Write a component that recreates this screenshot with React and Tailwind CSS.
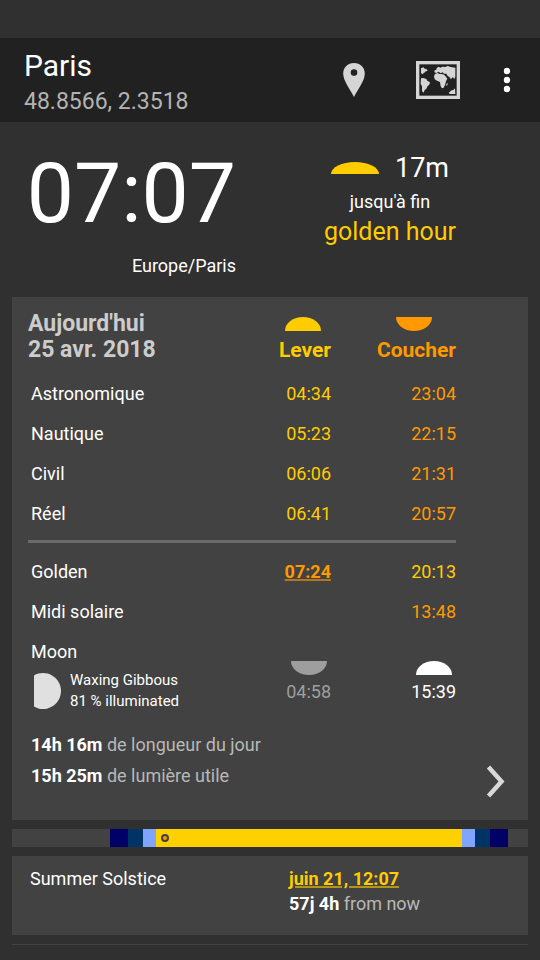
const sunTimes = [
  ["Astronomique", "04:34", "23:04"],
  ["Nautique", "05:23", "22:15"],
  ["Civil", "06:06", "21:31"],
  ["Réel", "06:41", "20:57"],
];

const dayPhases = [
  { name: "night", size: 98, color: "bg-transparent" },
  { name: "astronomical-am", size: 18, color: "bg-[#000066]" },
  { name: "nautical-am", size: 15, color: "bg-[#003366]" },
  { name: "civil-am", size: 13, color: "bg-[#80a5ff]" },
  { name: "day", size: 306, color: "bg-[#ffd000]" },
  { name: "civil-pm", size: 13, color: "bg-[#80a5ff]" },
  { name: "nautical-pm", size: 15, color: "bg-[#003366]" },
  { name: "astronomical-pm", size: 18, color: "bg-[#000066]" },
  { name: "late-night", size: 20, color: "bg-transparent" },
];
const dayLength = dayPhases.reduce((sum, p) => sum + p.size, 0);
const nowPosition = 153;

function Rising({ className }) {
  return (
    <svg viewBox="0 0 36 14" preserveAspectRatio="none" className={className} aria-hidden="true">
      <path d="M0 14A18 14 0 0 1 36 14Z" fill="currentColor" />
    </svg>
  );
}

function Setting({ className }) {
  return (
    <svg viewBox="0 0 36 14" preserveAspectRatio="none" className={className} aria-hidden="true">
      <path d="M0 0A18 14 0 0 0 36 0Z" fill="currentColor" />
    </svg>
  );
}

function Header() {
  return (
    <header className="flex h-[84px] items-center bg-[#212121] pl-6">
      <div className="flex-1 pt-2">
        <h1 className="text-[30px] leading-9">Paris</h1>
        <p className="text-[23px] leading-9 text-[#b3b3b3]">48.8566, 2.3518</p>
      </div>
      <button type="button" aria-label="Lieu" className="mr-[50px]">
        <svg viewBox="0 0 24 36" className="h-9 w-6 text-[#d5d5d5]" aria-hidden="true">
          <path
            fillRule="evenodd"
            fill="currentColor"
            d="M12 1C5.800 1 1.200 5.600 1.200 11.500C1.200 19 8 27 12 35C16 27 22.800 19 22.800 11.500C22.800 5.600 18.200 1 12 1ZM12 7.300A3.300 3.300 0 1 1 12 13.900A3.300 3.300 0 1 1 12 7.300Z"
          />
        </svg>
      </button>
      <button type="button" aria-label="Carte" className="mr-[35px]">
        <svg viewBox="0 0 132 114" className="h-[38px] w-[44px] text-[#d5d5d5]" aria-hidden="true">
          <rect x="5" y="5" width="122" height="104" fill="none" stroke="currentColor" strokeWidth="10" />
          <g fill="currentColor">
            <path d="M15 22L22 19L27 24L31 23L35 30L29 31L25 35L20 36L24 39L18 39L15 36Z" />
            <path d="M15 52L22 51L31 54L34 59L42 64L40 71L35 75L31 83L26 87L23 95L18 91L18 76L14 68Z" />
            <path d="M55 34L56 28L61 26L62 21L68 17L73 20L79 17L88 18L95 15L104 18L118 20L118 47L115 54L110 48L105 55L100 48L95 45L91 38L84 38L80 34L74 37L68 32L62 36Z" />
            <path d="M54 46L57 39L64 36L71 39L82 40L88 45L94 53L90 61L87 72L83 80L78 82L74 76L72 63L63 59L56 55Z" />
            <path d="M91 69L95 65L94 73L91 75Z" />
            <path d="M98 95L107 88L112 87L117 82L118 99L101 99Z" />
          </g>
        </svg>
      </button>
      <button type="button" aria-label="Menu" className="mr-[21px]">
        <svg viewBox="0 0 24 36" className="h-9 w-6" fill="currentColor" aria-hidden="true">
          <circle cx="12" cy="9" r="3.200" />
          <circle cx="12" cy="18" r="3.200" />
          <circle cx="12" cy="27" r="3.200" />
        </svg>
      </button>
    </header>
  );
}

function Clock() {
  return (
    <section className="flex h-[175px]">
      <div className="w-60 pr-1 pt-6 text-right">
        <p className="text-[84px] leading-[96px]">07:07</p>
        <p className="pt-3 text-lg leading-6">Europe/Paris</p>
      </div>
      <div className="flex flex-1 flex-col items-center pt-[30px]">
        <p className="flex items-center gap-4 text-[27px] leading-8">
          <Rising className="h-3 w-12 text-[#ffcc00]" />
          17m
        </p>
        <p className="pt-1.5 text-lg leading-6">jusqu'à fin</p>
        <p className="text-[25px] leading-9 text-[#ffcc00]">golden hour</p>
      </div>
    </section>
  );
}

function TodayCard() {
  return (
    <section className="mx-3 bg-[#424242] pl-4">
      <div className="pr-[72px]">
        <table className="w-full table-fixed text-lg leading-6">
          <colgroup>
            <col />
            <col className="w-[100px]" />
            <col className="w-[125px]" />
          </colgroup>
          <thead>
            <tr className="h-[77px] align-top">
              <th scope="col" className="pt-3.5 text-left text-[23px] leading-[26px] font-bold text-[#cccccc]">
                Aujourd'hui
                <br />
                25 avr. 2018
              </th>
              <th scope="col" className="pt-5 text-right text-[21px] leading-[38px] font-bold text-[#ffcc00]">
                <Rising className="mr-2.5 ml-auto block h-3.5 w-9" />
                Lever
              </th>
              <th scope="col" className="pt-5 text-right text-[21px] leading-[38px] font-bold text-[#ff9900]">
                <Setting className="mr-6 ml-auto block h-3.5 w-9" />
                Coucher
              </th>
            </tr>
          </thead>
          <tbody>
            {sunTimes.map(([label, rise, set]) => (
              <tr key={label} className="h-10">
                <th scope="row" className="pl-[3px] text-left font-normal">{label}</th>
                <td className="text-right text-[#ffcc00]">{rise}</td>
                <td className="text-right text-[#ff9900]">{set}</td>
              </tr>
            ))}
            <tr>
              <td colSpan={3} className="pt-1.5 pb-[9px]">
                <hr className="h-[3px] border-0 bg-[#6b6b6b]" />
              </td>
            </tr>
            <tr className="h-10">
              <th scope="row" className="pl-[3px] text-left font-normal">Golden</th>
              <td className="text-right font-bold text-[#ff9900] underline decoration-[#ff9900]/60 decoration-2">07:24</td>
              <td className="text-right text-[#ffcc00]">20:13</td>
            </tr>
            <tr className="h-10">
              <th scope="row" className="pl-[3px] text-left font-normal">Midi solaire</th>
              <td />
              <td className="text-right text-[#ff9900]">13:48</td>
            </tr>
            <tr className="align-top">
              <th scope="row" className="pt-2 pl-[3px] text-left font-normal">
                Moon
                <div className="flex items-center gap-2 pt-1.5 pl-[3px] text-[15px] leading-[21px]">
                  <svg viewBox="0 0 28 36" className="h-9 w-7 text-[#e0e0e0]" aria-hidden="true">
                    <path d="M0 2.400A18 18 0 1 1 0 33.600Z" fill="currentColor" />
                  </svg>
                  <p>
                    Waxing Gibbous
                    <br />
                    81 % illuminated
                  </p>
                </div>
              </th>
              <td className="pt-[29px] text-right text-[#9e9e9e]">
                <Setting className="mr-1 mb-[5px] ml-auto block h-3.5 w-9" />
                04:58
              </td>
              <td className="pt-[29px] text-right">
                <Rising className="mr-1 mb-[5px] ml-auto block h-3.5 w-9" />
                15:39
              </td>
            </tr>
          </tbody>
        </table>
      </div>
      <div className="flex items-end justify-between pt-[17px] pr-5 pb-[19px] pl-[3px]">
        <div className="pb-2.5 text-lg leading-[31px] text-[#b8b8b8]">
          <p><b className="text-white">14h 16m</b> de longueur du jour</p>
          <p><b className="text-white">15h 25m</b> de lumière utile</p>
        </div>
        <button type="button" aria-label="Suivant">
          <svg viewBox="0 0 24 40" className="h-10 w-6 text-[#d9d9d9]" aria-hidden="true">
            <path d="M4.500 6L17.500 20.500L4.500 35" fill="none" stroke="currentColor" strokeWidth="4.500" />
          </svg>
        </button>
      </div>
    </section>
  );
}

function DayBar() {
  return (
    <div className="relative mx-3 mt-[9px] flex h-[18px] bg-[#424242]">
      {dayPhases.map((p) => (
        <div key={p.name} className={p.color} style={{ width: `${(p.size / dayLength) * 100}%` }} />
      ))}
      <span
        className="absolute top-[5px] size-2 -translate-x-1/2 rounded-full border-2 border-[#424242] bg-[#ff9900]"
        style={{ left: `${(nowPosition / dayLength) * 100}%` }}
      />
    </div>
  );
}

export default function App() {
  return (
    <main className="min-h-screen bg-[#303030] pt-[38px] font-['Roboto',sans-serif] text-white">
      <Header />
      <Clock />
      <TodayCard />
      <DayBar />
      <section className="mx-3 mt-[9px] flex bg-[#424242] pt-2.5 pb-[19px] pl-[18px] text-lg leading-[25px]">
        <h2 className="flex-1">Summer Solstice</h2>
        <div className="w-[239px]">
          <p className="font-bold text-[#ffcc00] underline decoration-[#ffcc00]/60 decoration-2">juin 21, 12:07</p>
          <p className="text-[#b8b8b8]"><b className="text-white">57j 4h</b> from now</p>
        </div>
      </section>
      <hr className="mx-3 mt-[9px] border-[#424242]" />
    </main>
  );
}
